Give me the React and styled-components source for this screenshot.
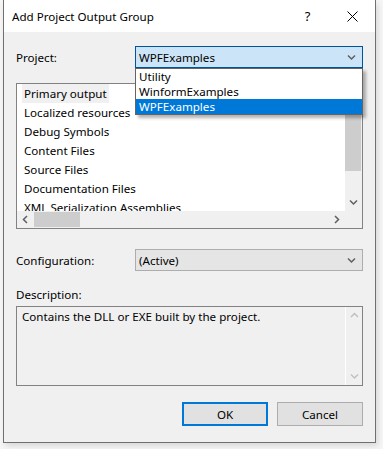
import React from "react";
import styled, { createGlobalStyle } from "styled-components";

const Global = createGlobalStyle`
  html, body { margin: 0; padding: 0; background: #f6f6f6; }
  body { font-family: "Noto Sans", "Open Sans", sans-serif; font-size: 11.6px; color: #000; }
  * { box-sizing: border-box; }
`;

const Page = styled.div`
  width: 383px;
  height: 449px;
  padding-left: 3px;
  overflow: hidden;
`;

const Window = styled.div`
  width: 373px;
  height: 443px;
  border: 1px solid #707070;
  border-top: none;
  background: #f0f0f0;
  display: flex;
  flex-direction: column;
  box-shadow: 2px 3px 6px rgba(0, 0, 0, 0.12);
`;

const TitleBar = styled.div`
  height: 32px;
  background: #fff;
  display: flex;
  align-items: center;
  padding-left: 8px;
`;

const Title = styled.div`
  flex: 1;
  font-size: 11.6px;
`;

const CaptionButton = styled.div`
  width: 45px;
  height: 32px;
  display: flex;
  align-items: center;
  justify-content: center;
  font-size: 13px;
  color: #000;
`;

const Body = styled.div`
  flex: 1;
  padding: 14px 12px 0 12px;
  display: flex;
  flex-direction: column;
  position: relative;
`;

const Row = styled.div`
  display: flex;
  align-items: center;
  height: 22px;
  margin-top: ${(p) => p.$mt || "0px"};
`;

const Label = styled.div`
  width: 119px;
`;

const Combo = styled.div`
  flex: 1;
  height: 22px;
  border: 1px solid ${(p) => (p.$focused ? "#005499" : "#adadad")};
  background: ${(p) => (p.$focused ? "#cce4f7" : "#e5e5e5")};
  display: flex;
  align-items: center;
  padding-left: 3px;
  padding-right: 6px;
  position: relative;
`;

const ComboText = styled.div`
  flex: 1;
`;

const Dropdown = styled.div`
  position: absolute;
  left: -1px;
  right: -1px;
  top: 21px;
  background: #fff;
  border: 1px solid #646464;
  box-shadow: 3px 3px 3px rgba(0, 0, 0, 0.3);
  z-index: 5;
`;

const DropItem = styled.div`
  height: 15px;
  line-height: 15px;
  padding-left: 3px;
  background: ${(p) => (p.$sel ? "#0078d7" : "transparent")};
  color: ${(p) => (p.$sel ? "#fff" : "#000")};
`;

const ListBox = styled.div`
  margin-top: 15px;
  height: 146px;
  border: 1px solid #828282;
  background: #fff;
  display: grid;
  grid-template-columns: 1fr 17px;
  grid-template-rows: 1fr 17px;
`;

const ListItems = styled.div`
  overflow: hidden;
  padding-left: 5px;
`;

const ItemLine = styled.div`
  height: 19px;
`;

const ListItem = styled.div`
  height: 19px;
  line-height: 19px;
  padding: 0 2px;
  display: inline-block;
  white-space: nowrap;
  background: ${(p) => (p.$sel ? "#f0f0f0" : "transparent")};
`;

const VScroll = styled.div`
  background: #f0f0f0;
  display: flex;
  flex-direction: column;
`;

const ArrowBox = styled.div`
  height: 17px;
  display: flex;
  align-items: center;
  justify-content: center;
  flex: none;
  width: ${(p) => p.$w || "auto"};
`;

const VThumb = styled.div`
  height: 70px;
  margin-right: 1px;
  background: #cdcdcd;
`;

const Spacer = styled.div`
  flex: 1;
`;

const HScroll = styled.div`
  background: #f0f0f0;
  display: flex;
  align-items: stretch;
`;

const HThumb = styled.div`
  width: 46px;
  background: #cdcdcd;
  margin: 1px 0;
`;

const Corner = styled.div`
  background: #f0f0f0;
`;

const DescLabel = styled.div`
  margin-top: 15px;
  height: 18px;
  line-height: 18px;
`;

const DescBox = styled.div`
  margin-top: 2px;
  height: 80px;
  border: 1px solid #828282;
  display: flex;
`;

const DescText = styled.div`
  flex: 1;
  padding: 2px 5px;
  line-height: 16px;
  border-right: 1px solid #fff;
`;

const DescScroll = styled.div`
  width: 16px;
  display: flex;
  flex-direction: column;
  justify-content: space-between;
`;

const Buttons = styled.div`
  margin-top: 16px;
  display: flex;
  justify-content: flex-end;
  gap: 9px;
`;

const Button = styled.div`
  width: 86px;
  height: 24px;
  background: #e1e1e1;
  border: ${(p) => (p.$def ? "2px solid #0078d7" : "1px solid #adadad")};
  display: flex;
  align-items: center;
  justify-content: center;
`;

const Chevron = ({ dir = "down", color = "#606060" }) => {
  const paths = {
    down: "M1 2.5 L4.5 6 L8 2.5",
    up: "M1 6 L4.5 2.5 L8 6",
    left: "M6 1 L2.5 4.5 L6 8",
    right: "M3 1 L6.5 4.5 L3 8",
  };
  return (
    <svg width="9" height="9" viewBox="0 0 9 9">
      <path d={paths[dir]} fill="none" stroke={color} strokeWidth="1.5" />
    </svg>
  );
};

const CloseIcon = () => (
  <svg width="11" height="11" viewBox="0 0 11 11">
    <path d="M0.5 0.5 L10.5 10.5 M10.5 0.5 L0.5 10.5" stroke="#000" strokeWidth="1" />
  </svg>
);

const items = [
  "Primary output",
  "Localized resources",
  "Debug Symbols",
  "Content Files",
  "Source Files",
  "Documentation Files",
  "XML Serialization Assemblies",
];

export default function App() {
  return (
    <>
      <Global />
      <Page>
        <Window>
          <TitleBar>
            <Title>Add Project Output Group</Title>
            <CaptionButton>?</CaptionButton>
            <CaptionButton>
              <CloseIcon />
            </CaptionButton>
          </TitleBar>
          <Body>
            <Row>
              <Label>Project:</Label>
              <Combo $focused>
                <ComboText>WPFExamples</ComboText>
                <Chevron />
                <Dropdown>
                  <DropItem>Utility</DropItem>
                  <DropItem>WinformExamples</DropItem>
                  <DropItem $sel>WPFExamples</DropItem>
                </Dropdown>
              </Combo>
            </Row>
            <ListBox>
              <ListItems>
                {items.map((t, i) => (
                  <ItemLine key={t}>
                    <ListItem $sel={i === 0}>{t}</ListItem>
                  </ItemLine>
                ))}
              </ListItems>
              <VScroll>
                <ArrowBox>
                  <Chevron dir="up" />
                </ArrowBox>
                <VThumb />
                <Spacer />
                <ArrowBox>
                  <Chevron dir="down" />
                </ArrowBox>
              </VScroll>
              <HScroll>
                <ArrowBox $w="17px">
                  <Chevron dir="left" />
                </ArrowBox>
                <HThumb />
                <Spacer />
                <ArrowBox $w="17px">
                  <Chevron dir="right" />
                </ArrowBox>
              </HScroll>
              <Corner />
            </ListBox>
            <Row $mt="20px">
              <Label>Configuration:</Label>
              <Combo>
                <ComboText>(Active)</ComboText>
                <Chevron />
              </Combo>
            </Row>
            <DescLabel>Description:</DescLabel>
            <DescBox>
              <DescText>Contains the DLL or EXE built by the project.</DescText>
              <DescScroll>
                <ArrowBox>
                  <Chevron dir="up" color="#c0c0c0" />
                </ArrowBox>
                <ArrowBox>
                  <Chevron dir="down" color="#c0c0c0" />
                </ArrowBox>
              </DescScroll>
            </DescBox>
            <Buttons>
              <Button $def>OK</Button>
              <Button>Cancel</Button>
            </Buttons>
          </Body>
        </Window>
      </Page>
    </>
  );
}
